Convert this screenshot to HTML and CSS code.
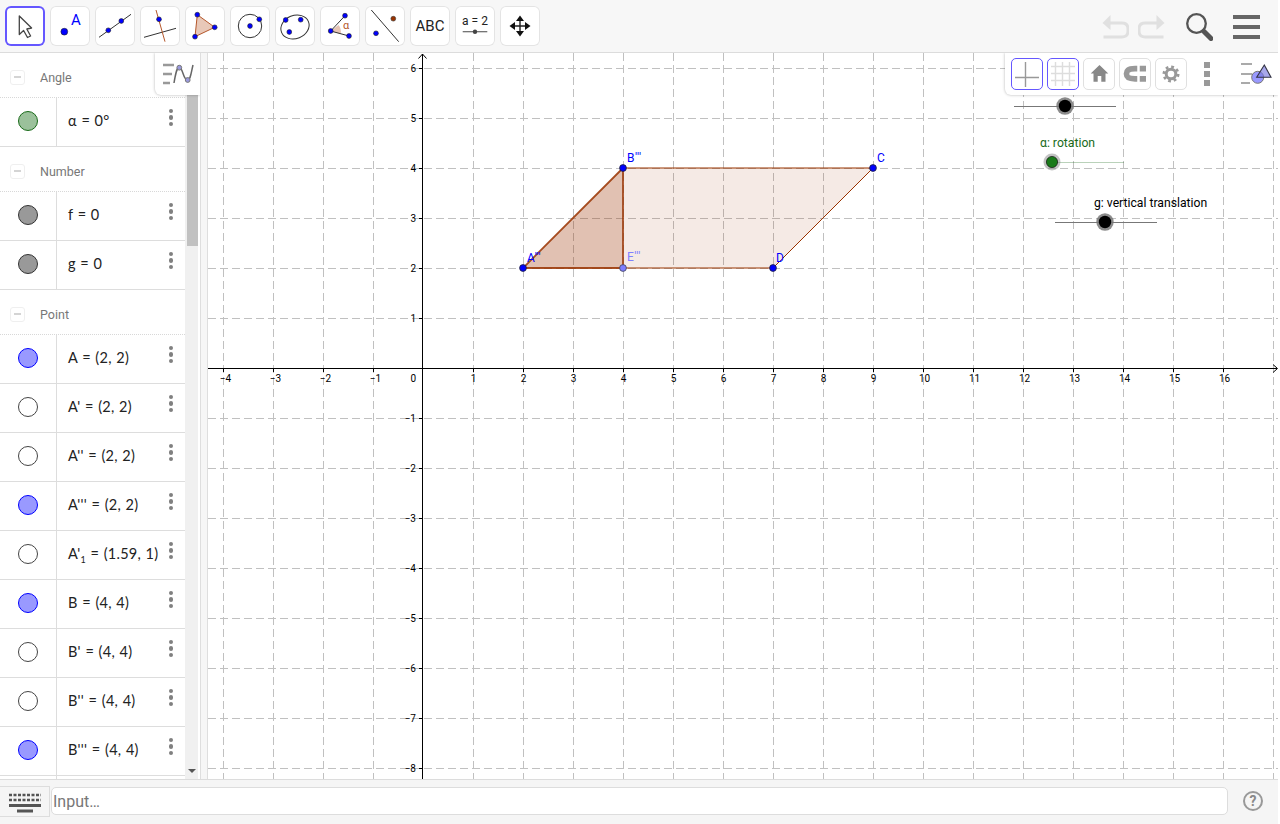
FILE: index.html
```html
<!DOCTYPE html>
<html lang="en">
<head>
<meta charset="utf-8">
<title>GeoGebra</title>
<link rel="stylesheet" href="styles.css">
</head>
<body>
<div class="app">
  <header class="toolbar">
    <div class="tools">
      <div class="tool active"><svg viewBox="0 0 40 40"><path d="M14.3 10V28.5L18.6 24.5L22.5 31.5L25.6 30L21.8 23L26.6 22Z" fill="#fff" stroke="#444" stroke-width="1.3" stroke-linejoin="round"/></svg></div>
      <div class="tool"><svg viewBox="0 0 40 40"><circle class="pt-big" cx="14.3" cy="25.7" r="3.4"/><text class="t-a" x="26" y="19">A</text></svg></div>
      <div class="tool"><svg viewBox="0 0 40 40"><path class="ln" d="M4 31.3L36 8.3"/><circle class="pt" cx="13.3" cy="24.3" r="2.4"/><circle class="pt" cx="26.3" cy="15" r="2.4"/></svg></div>
      <div class="tool"><svg viewBox="0 0 40 40"><path class="ln" d="M4 31.3L36 22.3"/><path class="ln-br" d="M16 4L25 35.7"/><circle class="pt" cx="19" cy="13.3" r="2.4"/></svg></div>
      <div class="tool"><svg viewBox="0 0 40 40"><path class="tri" d="M12.3 8.7L29.7 21.3L10 30.7Z"/><circle class="pt" cx="12.3" cy="8.7" r="2.4"/><circle class="pt" cx="29.7" cy="21.3" r="2.4"/><circle class="pt" cx="10" cy="30.7" r="2.4"/></svg></div>
      <div class="tool"><svg viewBox="0 0 40 40"><circle class="ln" cx="20" cy="20" r="11.7"/><circle class="pt" cx="20" cy="20" r="2.4"/><circle class="pt" cx="29.3" cy="13.3" r="2.4"/></svg></div>
      <div class="tool"><svg viewBox="0 0 40 40"><ellipse class="ln" cx="20" cy="21" rx="14.5" ry="11.5" transform="rotate(-22 20 21)"/><circle class="pt" cx="10.7" cy="14" r="2.4"/><circle class="pt" cx="25.7" cy="13.7" r="2.4"/><circle class="pt" cx="14.3" cy="26" r="2.4"/></svg></div>
      <div class="tool"><svg viewBox="0 0 40 40"><path d="M10.7 25L18.5 19A10 10 0 0 1 20.5 28Z" fill="#e6c4b4"/><path class="ln" d="M25 9.7L10.7 25L29 30"/><circle class="pt" cx="25" cy="9.7" r="2.4"/><circle class="pt" cx="10.7" cy="25" r="2.4"/><circle class="pt" cx="29" cy="30" r="2.4"/><text class="t-alpha" x="23" y="23">α</text></svg></div>
      <div class="tool"><svg viewBox="0 0 40 40"><path class="ln" d="M6.3 4L33.7 35.7"/><circle class="pt" cx="11" cy="27.3" r="2.4"/><circle cx="28.3" cy="12.7" r="2.4" fill="#993300" stroke="#333" stroke-width=".6"/></svg></div>
      <div class="tool"><span class="abc">ABC</span></div>
      <div class="tool"><svg viewBox="0 0 40 40"><text class="t-slider" x="20" y="19">a = 2</text><path d="M7.7 25.7H32.3" stroke="#666" stroke-width="1.2"/><circle cx="20" cy="25.7" r="2.2" fill="#444"/></svg></div>
      <div class="tool"><svg viewBox="0 0 40 40"><path d="M14 20H26M20 14V26" stroke="#222" stroke-width="1.400"/><path d="M20 9.500L24 15H16ZM20 30.500L16 25H24ZM9.500 20L15 16V24ZM30.500 20L25 24V16Z" fill="#111"/></svg></div>
    </div>
    <div class="actions">
      <svg class="act undo" viewBox="0 0 28 28"><path d="M1.500 10L9.500 2V17Z" fill="#e0e0e0"/><path d="M8 10H21Q27 10 27 16V18Q27 24 21 24H2.500" fill="none" stroke="#e0e0e0" stroke-width="3"/></svg>
      <svg class="act redo" viewBox="0 0 28 28"><path d="M26.500 10L18.500 2V17Z" fill="#e0e0e0"/><path d="M20 10H7Q1 10 1 16V18Q1 24 7 24H25.500" fill="none" stroke="#e0e0e0" stroke-width="3"/></svg>
      <svg class="act search" viewBox="0 0 28 28"><circle cx="11.500" cy="10.500" r="9.300" fill="none" stroke="#555" stroke-width="2.300"/><path d="M19 18.500L26 25.500" stroke="#555" stroke-width="5" stroke-linecap="round"/></svg>
      <div class="menu"><span></span><span></span><span></span></div>
    </div>
  </header>

  <main class="main">
    <aside class="algebra">
      <div class="list">
        <div class="group"><span class="minus"></span><span>Angle</span></div>
        <div class="row"><div class="cell-m"><span class="marble m-green"></span></div><div class="val">α = 0°</div><span class="dots"><i></i><i></i><i></i></span></div>
        <div class="group"><span class="minus"></span><span>Number</span></div>
        <div class="row"><div class="cell-m"><span class="marble m-grey"></span></div><div class="val">f = 0</div><span class="dots"><i></i><i></i><i></i></span></div>
        <div class="row"><div class="cell-m"><span class="marble m-grey"></span></div><div class="val">g = 0</div><span class="dots"><i></i><i></i><i></i></span></div>
        <div class="group"><span class="minus"></span><span>Point</span></div>
        <div class="row"><div class="cell-m"><span class="marble m-blue"></span></div><div class="val">A = (2, 2)</div><span class="dots"><i></i><i></i><i></i></span></div>
        <div class="row"><div class="cell-m"><span class="marble m-empty"></span></div><div class="val">A' = (2, 2)</div><span class="dots"><i></i><i></i><i></i></span></div>
        <div class="row"><div class="cell-m"><span class="marble m-empty"></span></div><div class="val">A'' = (2, 2)</div><span class="dots"><i></i><i></i><i></i></span></div>
        <div class="row"><div class="cell-m"><span class="marble m-blue"></span></div><div class="val">A''' = (2, 2)</div><span class="dots"><i></i><i></i><i></i></span></div>
        <div class="row"><div class="cell-m"><span class="marble m-empty"></span></div><div class="val">A'<sub>1</sub> = (1.59, 1)</div><span class="dots"><i></i><i></i><i></i></span></div>
        <div class="row"><div class="cell-m"><span class="marble m-blue"></span></div><div class="val">B = (4, 4)</div><span class="dots"><i></i><i></i><i></i></span></div>
        <div class="row"><div class="cell-m"><span class="marble m-empty"></span></div><div class="val">B' = (4, 4)</div><span class="dots"><i></i><i></i><i></i></span></div>
        <div class="row"><div class="cell-m"><span class="marble m-empty"></span></div><div class="val">B'' = (4, 4)</div><span class="dots"><i></i><i></i><i></i></span></div>
        <div class="row"><div class="cell-m"><span class="marble m-blue"></span></div><div class="val">B''' = (4, 4)</div><span class="dots"><i></i><i></i><i></i></span></div>
        <div class="row"><div class="cell-m"></div></div>
      </div>
      <div class="scrollbar"><div class="thumb"></div><div class="arrow"></div></div>
      <div class="toggle"><svg viewBox="0 0 45 42"><path d="M8 12H19M8 21H17M8 30H15" stroke="#999" stroke-width="2.600"/><path d="M19 30C21 18 22 14.500 24.300 14.500C28 14.500 28 27 32.700 27C35.500 27 36 20 38 12" fill="none" stroke="#666" stroke-width="1.500"/><circle cx="24.300" cy="14.700" r="2.400" fill="#9999dd" stroke="#777"/><circle cx="32.700" cy="27" r="2.400" fill="#9999dd" stroke="#777"/></svg></div>
    </aside>
    <div class="splitter"></div>
    <section class="graphics">
      <svg class="plot" viewBox="208 53 1070 726">
        <path class="grid" d="M223.500 53V779M273.500 53V779M323.500 53V779M373.500 53V779M473.500 53V779M523.500 53V779M573.500 53V779M623.500 53V779M673.500 53V779M723.500 53V779M773.500 53V779M823.500 53V779M873.500 53V779M923.500 53V779M973.500 53V779M1023.500 53V779M1073.500 53V779M1123.500 53V779M1173.500 53V779M1223.500 53V779M1273.500 53V779"/>
        <path class="grid" d="M208 68.500H1278M208 118.500H1278M208 168.500H1278M208 218.500H1278M208 268.500H1278M208 318.500H1278M208 418.500H1278M208 468.500H1278M208 518.500H1278M208 568.500H1278M208 618.500H1278M208 668.500H1278M208 718.500H1278M208 768.500H1278"/>
        <path class="axis" d="M208 368.500H1277M422.500 54V779"/>
        <path class="axis" d="M1273 364.500L1277.500 368.500L1273 372.500M418.500 58.500L422.500 54L426.500 58.500"/>
        <path class="axis" d="M223.500 368V372M273.500 368V372M323.500 368V372M373.500 368V372M473.500 368V372M523.500 368V372M573.500 368V372M623.500 368V372M673.500 368V372M723.500 368V372M773.500 368V372M823.500 368V372M873.500 368V372M923.500 368V372M973.500 368V372M1023.500 368V372M1073.500 368V372M1123.500 368V372M1173.500 368V372M1223.500 368V372M419 68.500H423M419 118.500H423M419 168.500H423M419 218.500H423M419 268.500H423M419 318.500H423M419 418.500H423M419 468.500H423M419 518.500H423M419 568.500H423M419 618.500H423M419 668.500H423M419 718.500H423M419 768.500H423"/>

        <g class="nx">
          <text x="225.500" y="382">−4</text><text x="275.500" y="382">−3</text><text x="325.500" y="382">−2</text><text x="375.500" y="382">−1</text>
          <text x="473.500" y="382">1</text><text x="523.500" y="382">2</text><text x="573.500" y="382">3</text><text x="623.500" y="382">4</text><text x="673.500" y="382">5</text><text x="723.500" y="382">6</text><text x="773.500" y="382">7</text><text x="823.500" y="382">8</text><text x="873.500" y="382">9</text><text x="924.500" y="382">10</text><text x="974.500" y="382">11</text><text x="1024.500" y="382">12</text><text x="1074.500" y="382">13</text><text x="1124.500" y="382">14</text><text x="1174.500" y="382">15</text><text x="1224.500" y="382">16</text>
        </g>
        <g class="ny">
          <text x="416" y="382">0</text>
          <text x="416" y="72">6</text><text x="416" y="122">5</text><text x="416" y="172">4</text><text x="416" y="222">3</text><text x="416" y="272">2</text><text x="416" y="322">1</text>
          <text x="416" y="422">−1</text><text x="416" y="472">−2</text><text x="416" y="522">−3</text><text x="416" y="572">−4</text><text x="416" y="622">−5</text><text x="416" y="672">−6</text><text x="416" y="722">−7</text><text x="416" y="772">−8</text>
        </g>

        <path d="M523 268H773L873 168H623Z" fill="#993300" fill-opacity=".1"/>
        <path d="M523 268H623V168Z" fill="#993300" fill-opacity=".22"/>
        <path d="M623 168H873M623 268H773" stroke="#993300" stroke-opacity=".5" stroke-width="1.800" fill="none"/>
        <path d="M773 268L873 168" stroke="#993300" stroke-width="1" fill="none"/>
        <path d="M523 268H623V168Z" stroke="#993300" stroke-opacity=".85" stroke-width="1.800" fill="none"/>

        <circle class="gpt" cx="523" cy="268" r="3.400"/>
        <circle class="gpt" cx="623" cy="168" r="3.400"/>
        <circle class="gpt" cx="873" cy="168" r="3.400"/>
        <circle class="gpt" cx="773" cy="268" r="3.400"/>
        <circle class="gpt-e" cx="623" cy="268" r="3.400"/>
        <g class="lbl">
          <text x="527" y="262">A'''</text>
          <text x="627" y="162">B'''</text>
          <text x="877" y="162">C</text>
          <text x="776" y="262">D</text>
          <text class="lbl-e" x="627" y="261">E'''</text>
        </g>

        <path d="M1014 106.500H1116" stroke="#777" stroke-width="1"/>
        <circle class="halo" cx="1065" cy="106" r="8.700"/><circle cx="1065" cy="106" r="6.200" fill="#000"/>
        <text class="s-green" x="1040" y="147">α: rotation</text>
        <path d="M1052 162.500H1124" stroke="#1a6b1a" stroke-opacity=".3" stroke-width="1"/>
        <circle class="halo-g" cx="1052" cy="162" r="8.500"/><circle cx="1052" cy="162" r="5.600" fill="#1a7a1a" stroke="#000" stroke-width=".6"/>
        <text class="s-black" x="1094" y="207">g: vertical translation</text>
        <path d="M1055 222.500H1157" stroke="#777" stroke-width="1"/>
        <circle class="halo" cx="1105" cy="222" r="8.700"/><circle cx="1105" cy="222" r="6.200" fill="#000"/>
      </svg>

      <div class="stylebar">
        <div class="sb on"><svg viewBox="0 0 30 30"><path d="M3 18.500H27M13.500 3V28" stroke="#999" stroke-width="1.400"/></svg></div>
        <div class="sb on"><svg viewBox="0 0 30 30"><path d="M3 7.500H27M3 14.500H27M3 21.500H27M7.500 3V27M14.500 3V27M21.500 3V27" stroke="#ddd" stroke-width="1.400"/></svg></div>
        <div class="sb"><svg viewBox="0 0 30 30"><path d="M15.500 6L24.300 14.500H21.500V22.700H17.300V17H13.700V22.700H9.500V14.500H6.700Z" fill="#888"/></svg></div>
        <div class="sb"><svg viewBox="0 0 30 30"><path d="M26 9.700H15C7.500 9.700 6.500 12 6.500 14.800C6.500 18 8 19.800 15 19.800H26" fill="none" stroke="#999" stroke-width="5.700"/><path d="M18.500 6V24" stroke="#fff" stroke-width="2.500"/></svg></div>
        <div class="sb"><svg viewBox="0 0 30 30"><circle cx="15" cy="15" r="4.800" fill="none" stroke="#999" stroke-width="3"/><circle cx="15" cy="15" r="7.200" fill="none" stroke="#999" stroke-width="2.600" stroke-dasharray="2.800 2.850"/></svg></div>
        <div class="sb-dots"><i></i><i></i><i></i></div>
        <svg class="sb-toggle" viewBox="0 0 36 32"><path d="M3 6H14M3 16H14M3 25H12" stroke="#aaa" stroke-width="2"/><circle cx="19.700" cy="19.300" r="6" fill="#9999ff" stroke="#777"/><path d="M26.300 7L33 19.300H18.700Z" fill="#7a7ae0" fill-opacity=".65" stroke="#334" stroke-width="1.100"/></svg>
      </div>
    </section>
  </main>

  <footer class="inputbar">
    <div class="kbd"><svg viewBox="0 0 34 22"><path d="M1 2H33" stroke="#555" stroke-width="2.500" stroke-dasharray="3 1.500"/><path d="M1 7H33" stroke="#555" stroke-width="2.500" stroke-dasharray="3 1.500"/><path d="M1 12.500H33" stroke="#555" stroke-width="3"/><path d="M9 18H25" stroke="#555" stroke-width="3"/></svg></div>
    <div class="field">Input…</div>
    <div class="help">?</div>
  </footer>
</div>
</body>
</html>
```
FILE: styles.css
```css
* { box-sizing: border-box; }
html, body { margin: 0; padding: 0; background: #fff; }
body { width: 1280px; height: 824px; overflow: hidden; font-family: Roboto, "Liberation Sans", sans-serif; }
.app { width: 1278px; height: 824px; display: flex; flex-direction: column; }

.toolbar { height: 53px; flex: none; background: #f7f7f7; border-bottom: 1px solid #dcdcdc; display: flex; justify-content: space-between; padding: 6px 18px 0 5px; }
.tools { display: flex; gap: 5px; }
.tool { width: 40px; height: 40px; background: #fff; border-radius: 6px; box-shadow: inset 0 0 0 1px #e4e4e4; display: flex; align-items: center; justify-content: center; }
.tool svg { display: block; width: 40px; height: 40px; }
.tool.active { box-shadow: inset 0 0 0 2px #6557ff; }
.ln { fill: none; stroke: #333; stroke-width: 1; }
.ln-br { fill: none; stroke: #b5572b; stroke-width: 1; }
.pt { fill: #0000ff; stroke: #222; stroke-width: .6; }
.pt-big { fill: #0000ff; stroke: #222; stroke-width: .6; }
.tri { fill: #e8c8b8; stroke: #b5572b; stroke-width: 1; }
.t-a { font: 15px Roboto, sans-serif; fill: #0000ff; text-anchor: middle; }
.t-alpha { font: 11px Roboto, sans-serif; fill: #b5572b; }
.t-slider { font: 12px Roboto, sans-serif; fill: #222; text-anchor: middle; }
.abc { font-size: 15px; color: #222; }

.actions { display: flex; align-items: flex-start; gap: 9px; padding-top: 7px; }
.act { display: block; width: 28px; height: 28px; }
.redo { margin-right: 10px; }
.search { margin-right: 10px; }
.menu { width: 27px; height: 24px; margin-top: 2px; margin-left: 1px; display: flex; flex-direction: column; justify-content: space-between; }
.menu span { display: block; height: 4px; background: #666; }

.main { flex: 1; min-height: 0; display: flex; }
.algebra { width: 200px; flex: none; position: relative; display: flex; overflow: hidden; padding-right: 2px; background: #fff; }
.list { width: 185px; flex: none; overflow: hidden; }
.group { height: 45px; padding: 4px 0 0 10px; display: flex; align-items: center; gap: 15px; font-size: 12.500px; color: #777; border-bottom: 1px dotted #d8d8d8; }
.minus { width: 15px; height: 15px; border: 1px solid #efefef; border-radius: 3px; position: relative; display: flex; align-items: center; justify-content: center; }
.minus::after { content: ""; width: 7px; height: 2px; background: #d4d4d4; }
.row { height: 49px; display: flex; border-bottom: 1px solid #ddd; }
.cell-m { width: 57px; flex: none; border-right: 1px solid #ddd; display: flex; align-items: center; justify-content: center; padding: 0 1px 3px 0; }
.marble { width: 20px; height: 20px; border-radius: 50%; border: 1px solid #333; }
.m-green { background: #9bc19b; border-color: #1a6b1a; }
.m-grey { background: #999; border-color: #333; }
.m-blue { background: #9999ff; border-color: #0000ff; }
.m-empty { background: #fff; border-color: #444; }
.val { flex: 1; min-width: 0; padding: 0 0 3px 11px; display: flex; align-items: center; white-space: pre; font-family: Lato, sans-serif; font-size: 14.500px; letter-spacing: .25px; word-spacing: .6px; color: #222; }
.val sub { font-size: 9px; align-self: flex-end; line-height: 1; margin-bottom: 12px; }
.dots { width: 28px; flex: none; display: flex; flex-direction: column; align-items: center; gap: 2px; padding: 10.500px 0 0 0; }
.dots i { display: block; width: 4.500px; height: 4.500px; border-radius: 50%; background: #808080; }

.scrollbar { width: 13px; flex: none; background: #f0f0f0; display: flex; flex-direction: column; align-items: flex-end; justify-content: space-between; }
.thumb { width: 11px; height: 193px; background: #c1c1c1; }
.arrow { width: 0; height: 0; border-left: 4px solid transparent; border-right: 4px solid transparent; border-top: 4px solid #555; margin: 0 2px 6px 0; }
.toggle { position: absolute; top: 0; right: 0; width: 45px; height: 42px; background: #fff; border-bottom-left-radius: 6px; box-shadow: 0 0 3px rgba(0,0,0,.3); }
.toggle svg { display: block; width: 45px; height: 42px; }

.splitter { width: 8px; flex: none; background: #f6f6f6; border-left: 1px solid #dedede; border-right: 1px solid #dedede; }
.graphics { flex: 1; min-width: 0; position: relative; overflow: hidden; background: #fff; }
.plot { display: block; width: 1070px; height: 726px; }
.grid { fill: none; stroke: #c0c0c0; stroke-width: 1; stroke-dasharray: 8 4; }
.axis { fill: none; stroke: #000; stroke-width: 1; }
.nx text { font: 10px Roboto, sans-serif; fill: #000; text-anchor: middle; }
.ny text { font: 10px Roboto, sans-serif; fill: #000; text-anchor: end; }
.gpt { fill: #0000ff; stroke: #223; stroke-width: .8; }
.gpt-e { fill: #7d7dff; stroke: #445; stroke-width: .8; }
.lbl text { font: 12px Roboto, sans-serif; fill: #0000ff; letter-spacing: .5px; }
.lbl .lbl-e { fill: #8080ff; }
.halo { fill: #777; fill-opacity: .85; }
.halo-g { fill: #888; fill-opacity: .5; }
.s-green { font: 12.200px Roboto, sans-serif; fill: #1a6b1a; }
.s-black { font: 12.200px Roboto, sans-serif; fill: #000; }

.stylebar { position: absolute; top: 0; right: 0; width: 273px; height: 42px; background: #fff; border-bottom-left-radius: 6px; box-shadow: 0 0 3px rgba(0,0,0,.3); display: flex; gap: 4px; padding: 5px 0 0 6px; }
.sb { width: 32px; height: 32px; border: 1px solid #e0e0e0; border-radius: 5px; flex: none; }
.sb svg { display: block; width: 30px; height: 30px; }
.sb.on { border-color: #6557ff; }
.sb-dots { width: 6px; height: 24px; margin: 4px 0 0 13px; flex: none; display: flex; flex-direction: column; justify-content: space-between; }
.sb-dots i { display: block; height: 6px; background: #999; }
.sb-toggle { display: block; width: 36px; height: 32px; margin: 0 0 0 24px; flex: none; }

.inputbar { height: 45px; flex: none; background: #f5f5f5; border-top: 1px solid #dcdcdc; display: flex; align-items: flex-start; }
.kbd { width: 50px; height: 31px; margin-top: 6px; padding-top: 4px; background: #f5f5f5; border: 1px solid #ddd; border-left: 0; display: flex; align-items: center; justify-content: center; flex: none; }
.kbd svg { display: block; width: 34px; height: 22px; }
.field { width: 1177px; height: 28px; margin: 7px 0 0 1px; flex: none; background: #fff; border: 1px solid #ddd; border-radius: 5px; padding-left: 1px; font-size: 16px; line-height: 27px; color: #777; }
.help { width: 20px; height: 20px; margin: 11px 0 0 15px; flex: none; border: 2px solid #999; border-radius: 50%; color: #888; font-size: 14px; font-weight: 700; line-height: 16px; text-align: center; }
```
